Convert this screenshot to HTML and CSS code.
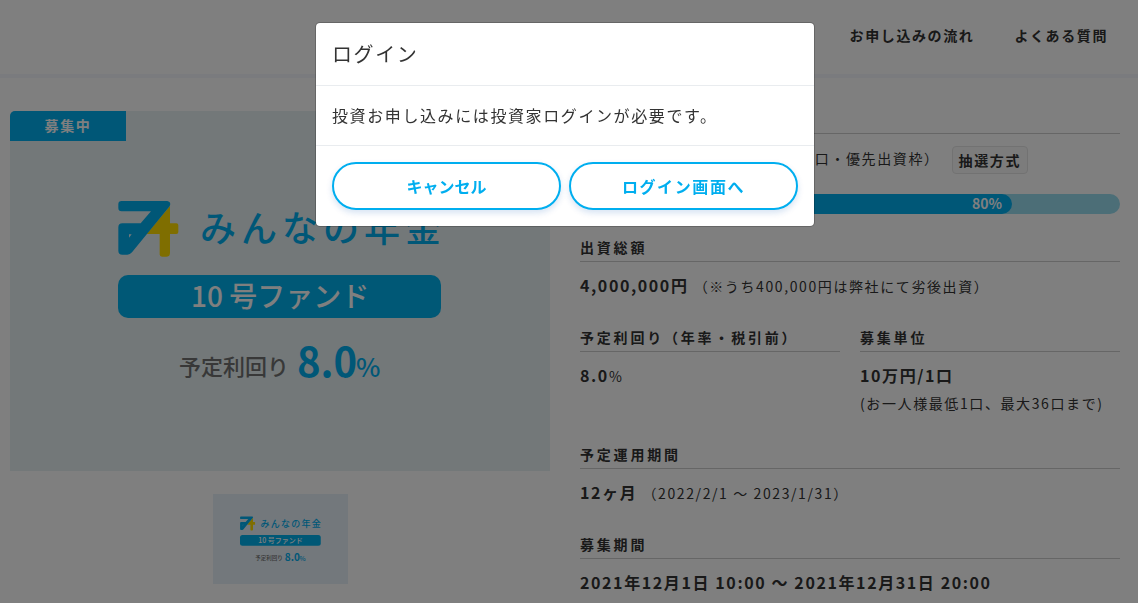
FILE: index.html
```html
<!DOCTYPE html>
<html lang="ja">
<head>
  <meta charset="utf-8">
  <meta name="viewport" content="width=device-width, initial-scale=1">
  <title>みんなの年金 10号ファンド</title>
  <link rel="stylesheet" href="styles.css">
</head>
<body>
  <header class="header">
    <nav class="nav">
      <a href="#">お申し込みの流れ</a>
      <a href="#">よくある質問</a>
    </nav>
  </header>

  <main class="main">
    <div class="gallery">
      <div class="gallery-main">
        <svg viewBox="0 0 540 360" role="img" aria-label="みんなの年金 10号ファンド">
          <g id="fund">
            <g transform="translate(90 69) scale(.3333)">
              <path fill="#ffdc00" d="M210 78V130H229Q235 130 235 136V156Q235 162 229 162H210V219Q210 230 199 230H186Q179 230 179 223V162H140Z"/>
              <path fill="#00aeef" fill-rule="evenodd" d="M65 63H202Q215 66 209 79L96 217Q90 224 82 224H67Q55 224 55 212V142Q55 130 67 130H122L153 94H65Q55 94 55 84V73Q55 63 65 63ZM87 163V173L95 163Z"/>
            </g>
            <text class="fund-name" x="190" y="131">みんなの年金</text>
            <rect x="108" y="164" width="323" height="43" rx="10" fill="#00b0ec"/>
            <text class="fund-no" x="181" y="196">10 号ファンド</text>
            <text class="fund-label" x="169" y="264">予定利回り</text>
            <text class="fund-rate" x="287" y="266">8.0</text>
            <text class="fund-percent" x="346" y="266">%</text>
          </g>
        </svg>
        <span class="ribbon">募集中</span>
      </div>
      <div class="thumb">
        <svg viewBox="0 0 540 360" aria-hidden="true"><use href="#fund"/></svg>
      </div>
    </div>

    <div class="detail">
      <section class="item item-first">
        <hr>
        <div class="amount">
          <p><strong>3,600,000円</strong> <small>（36口・優先出資枠）</small></p>
          <span class="badge">抽選方式</span>
        </div>
        <div class="progress">
          <div class="progress-bar" style="width: 80%">80%</div>
        </div>
      </section>

      <section class="item">
        <h3>出資総額</h3>
        <p><strong>4,000,000円</strong> <small>（※うち400,000円は弊社にて劣後出資）</small></p>
      </section>

      <div class="row">
        <section class="item">
          <h3>予定利回り（年率・税引前）</h3>
          <p><strong>8.0</strong><small>%</small></p>
        </section>
        <section class="item">
          <h3>募集単位</h3>
          <p><strong>10万円/1口</strong><br><small>(お一人様最低1口、最大36口まで)</small></p>
        </section>
      </div>

      <section class="item">
        <h3>予定運用期間</h3>
        <p><strong>12ヶ月</strong> <small>（2022/2/1 ～ 2023/1/31）</small></p>
      </section>

      <section class="item">
        <h3>募集期間</h3>
        <p><strong>2021年12月1日 10:00 ～ 2021年12月31日 20:00</strong></p>
      </section>
    </div>
  </main>

  <!-- Login modal -->
  <div class="backdrop">
    <div class="modal" role="dialog" aria-modal="true" aria-labelledby="modalTitle">
      <div class="modal-header">
        <h5 id="modalTitle">ログイン</h5>
      </div>
      <div class="modal-body">投資お申し込みには投資家ログインが必要です。</div>
      <div class="modal-footer">
        <button type="button" class="btn">キャンセル</button>
        <a href="#" class="btn">ログイン画面へ</a>
      </div>
    </div>
  </div>
</body>
</html>
```

FILE: styles.css
```css
* {
  box-sizing: border-box;
}
body {
  margin: 0;
  overflow: hidden;
  font-family: "Noto Sans CJK JP", sans-serif;
  font-size: 16px;
  line-height: 27px;
  letter-spacing: .1em;
  color: #333;
  background: #fff;
}
h3, h5, p {
  margin: 0;
}
a {
  color: inherit;
  text-decoration: none;
}
small {
  font-size: 14px;
  line-height: 20px;
}

/* Header */
.header {
  display: flex;
  align-items: center;
  justify-content: flex-end;
  height: 78px;
  padding: 0 30px 4px;
  border-bottom: 4px solid #f5f7fc;
}
.nav {
  display: flex;
  gap: 40px;
  font-size: 14px;
  font-weight: bold;
}

.main {
  display: grid;
  grid-template-columns: 1fr 1fr;
  gap: 30px;
  padding: 31px 18px 0 10px;
}

/* Gallery */
.gallery {
  padding-top: 2px;
}
.gallery-main {
  position: relative;
  background: #e6f0f3;
  border-radius: 5px 0 0 0;
  overflow: hidden;
}
.gallery svg {
  display: block;
  width: 100%;
}
.ribbon {
  position: absolute;
  top: 0;
  left: 0;
  width: 116px;
  height: 30px;
  line-height: 28px;
  font-size: 14px;
  font-weight: bold;
  text-align: center;
  color: #fff;
  background: #00aeef;
}
.thumb {
  width: 25%;
  margin: 23px auto 0;
  background: #e6f0f8;
}
.fund-name {
  font-size: 36px;
  font-weight: 500;
  letter-spacing: 5px;
  fill: #00aeef;
}
.fund-no {
  font-size: 28px;
  font-weight: 500;
  letter-spacing: 0;
  fill: #fff;
}
.fund-label {
  font-size: 22px;
  font-weight: 500;
  letter-spacing: 0;
  fill: #707070;
}
.fund-rate {
  font-size: 40px;
  font-weight: bold;
  letter-spacing: 0;
  fill: #00aeef;
}
.fund-percent {
  font-size: 26px;
  font-weight: 500;
  letter-spacing: 0;
  fill: #00aeef;
}

/* Fund detail */
.item {
  margin-bottom: 28px;
}
.item-first {
  margin-bottom: 23px;
}
.item hr {
  margin: 24px 0 10px;
  border: 0;
  border-top: 1px solid #ccc;
}
.item h3 {
  margin-bottom: 10px;
  padding-bottom: 4px;
  border-bottom: 1px solid #ccc;
  font-size: 14px;
  line-height: 20px;
  letter-spacing: .2em;
}
.row {
  display: grid;
  grid-template-columns: 1fr 1fr;
  gap: 20px;
}
.amount {
  display: flex;
  align-items: flex-start;
  justify-content: flex-end;
  gap: 12px;
  padding-right: 92px;
}
.badge {
  margin-top: 2px;
  padding: 0 6px;
  border: 1px solid #e5e5e5;
  border-radius: 4px;
  background: #f8f8f8;
  font-size: 14px;
  font-weight: bold;
  line-height: 26px;
}
.progress {
  height: 20px;
  margin-top: 20px;
  border-radius: 10px;
  background: #99dcef;
  overflow: hidden;
}
.progress-bar {
  height: 20px;
  padding-right: 10px;
  border-radius: 0 10px 10px 0;
  font-size: 14px;
  font-weight: bold;
  line-height: 18px;
  letter-spacing: 0;
  text-align: right;
  color: #fff;
  background: #00aeef;
}

/* Modal */
.backdrop {
  position: fixed;
  inset: 0;
  padding: 22px 8px 0 0;
  background: rgba(0, 0, 0, .5);
}
.modal {
  max-width: 500px;
  margin: 0 auto;
  border: 1px solid rgba(0, 0, 0, .2);
  border-radius: 5px;
  background: #fff;
  background-clip: padding-box;
}
.modal-header {
  padding: 16px;
  border-bottom: 1px solid #e9ecef;
}
.modal-header h5 {
  font-size: 20px;
  font-weight: 400;
  line-height: 30px;
}
.modal-body {
  padding: 16px;
}
.modal-footer {
  display: flex;
  gap: 8px;
  padding: 16px;
  border-top: 1px solid #e9ecef;
}
.btn {
  flex: 1;
  height: 48px;
  padding: 0;
  border: 2px solid #00aeef;
  border-radius: 24px;
  background: #fff;
  box-shadow: 0 3px 6px rgba(0, 80, 180, .16);
  color: #00aeef;
  font-family: inherit;
  font-size: 16px;
  font-weight: bold;
  line-height: 44px;
  text-align: center;
  cursor: pointer;
}
```
